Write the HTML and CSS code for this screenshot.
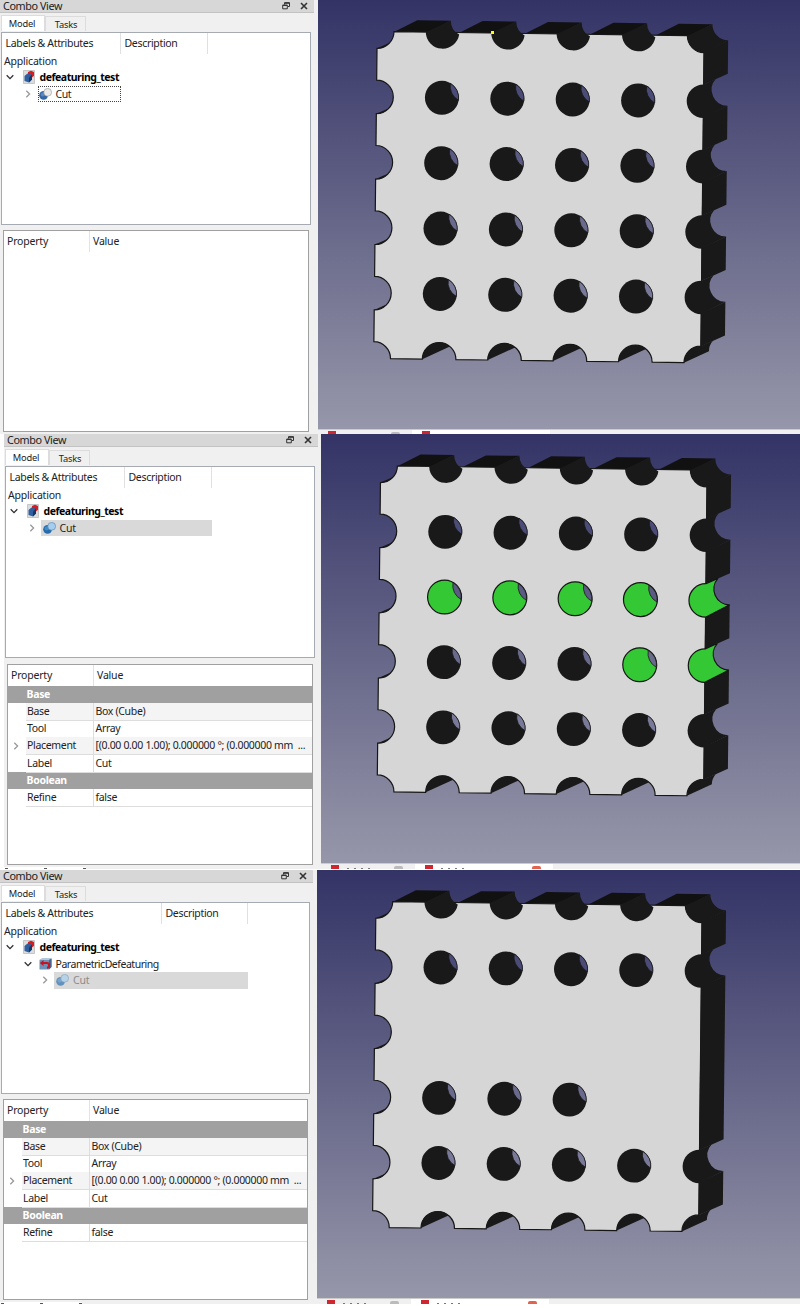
FILE: index.html
```html
<!DOCTYPE html>
<html lang="en">
<head>
<meta charset="utf-8">
<title>Parametric defeaturing</title>
<link rel="stylesheet" href="styles.css">
</head>
<body>
<svg class="defs" width="0" height="0" aria-hidden="true">
  <defs>
    <symbol id="i-float" viewBox="0 0 8 8"><path d="M2.5 2.5V.8h5v3.7H6M.7 3.2h4.6v3.6H.7z" fill="none" stroke="#333" stroke-width="1"/><path d="M2.5 1h5M.7 3.4h4.6" stroke="#333" stroke-width="1.4"/></symbol>
    <symbol id="i-close" viewBox="0 0 8 8"><path d="M1 1l6 6M7 1L1 7" stroke="#333" stroke-width="1.6"/></symbol>
    <symbol id="i-open" viewBox="0 0 8 8"><path d="M.7 2.2L4 5.6l3.3-3.4" fill="none" stroke="#333" stroke-width="1.3"/></symbol>
    <symbol id="i-shut" viewBox="0 0 8 8"><path d="M2.3 .7L5.6 4 2.3 7.3" fill="none" stroke="#999" stroke-width="1.3"/></symbol>
    <symbol id="i-doc" viewBox="0 0 12 14"><path d="M.5 .5h11v13H.5z" fill="#dcdcdc" stroke="#bbb" stroke-width=".8"/><path d="M5 2l3-1.200 3 1.300v3.700L9 7.500 5 5z" fill="#d51c22"/><path d="M1.500 6l3-2.600 4.500 1.200v5L6 12.500 1.500 11z" fill="#2f5f9e"/><path d="M6 7.500l3-2.900v5L6 12.500z" fill="#173763"/></symbol>
    <symbol id="i-cut" viewBox="0 0 13 12"><circle cx="4.600" cy="7.300" r="4.400" fill="#3465a4"/><circle cx="3.600" cy="6.600" r="2" fill="#5787bd"/><circle cx="8.700" cy="4.300" r="3.900" fill="#e9e9e7" stroke="#999" stroke-width=".6"/></symbol>
    <symbol id="i-cut-sel" viewBox="0 0 13 12"><circle cx="4.600" cy="7.300" r="4.400" fill="#256cae"/><circle cx="3.600" cy="6.600" r="2" fill="#438bc7"/><circle cx="8.700" cy="4.300" r="3.900" fill="#a5cdee" stroke="#5c8eb8" stroke-width=".7"/></symbol>
    <symbol id="i-defeat" viewBox="0 0 13 12"><path d="M.5 2L3 .5h9.500V9L10 11.500H.5z" fill="#6f91b8"/><path d="M.5 2L3 .5h9.500L10 2z" fill="#b2c7de"/><path d="M10 2l2.500-1.500V9L10 11.500z" fill="#46658d"/><path d="M3.500 5h4.200c3.300 0 3.300 4.500.3 4.800" fill="none" stroke="#c41420" stroke-width="2"/><path d="M.8 5l3.700-3v6z" fill="#c41420"/></symbol>

    <path id="front" d="M16.800 0H310.200A16.800 16.800 0 0 0 327 16.800V310.200A16.800 16.800 0 0 0 310.200 327H278.400A16.800 16.800 0 0 0 244.800 327H213A16.800 16.800 0 0 0 179.400 327H147.600A16.800 16.800 0 0 0 114 327H82.200A16.800 16.800 0 0 0 48.600 327H16.800A16.800 16.800 0 0 0 0 310.200V278.400A16.800 16.800 0 0 0 0 244.800V213A16.800 16.800 0 0 0 0 179.400V147.600A16.800 16.800 0 0 0 0 114V82.200A16.800 16.800 0 0 0 0 48.600V16.800A16.800 16.800 0 0 0 16.800 0Z"/>
    <path id="top-face" d="M16.300 .5L39.900 -11.800H73.500L49.600 .5Z"/>
    <path id="top-hole" d="M-16.800 0L8.100 -11.800A15.900 15.900 0 0 0 16.600 2A16.800 16.800 0 0 1 -16.800 0Z"/>
    <path id="bottom-hole" d="M-16.800 0A16.800 16.800 0 0 1 10.600 -13Z"/>
    <path id="left-hole" d="M0 16.800L12.600 11.100A16.800 16.800 0 0 1 0 16.800Z"/>
    <path id="right-hole" d="M0 -16.800L12 -22.300A15.900 15.900 0 0 0 24 4.100L0 16.800A16.800 16.800 0 0 1 0 -16.800Z"/>
    <path id="side-face" d="M-.4 16.300L24 4.100V37.700L-.4 49Z"/>
    <circle id="bore" r="17"/>
    <path id="lens" d="M8.340 -14.580A15.900 15.900 0 0 0 16.640 2.300A16.800 16.800 0 0 0 8.340 -14.580Z"/>
    <g id="hole"><use href="#bore"/><use href="#lens" class="through"/></g>
    <g id="hole-row"><use href="#hole" x="65.400"/><use href="#hole" x="130.800"/><use href="#hole" x="196.200"/><use href="#hole" x="261.600"/></g>
    <g id="shell">
      <g class="top"><use href="#top-face"/><use href="#top-face" x="65.400"/><use href="#top-face" x="130.800"/><use href="#top-face" x="196.200"/><use href="#top-face" x="261.600"/></g>
      <use href="#front" class="face"/>
      <use href="#top-hole" x="65.400"/><use href="#top-hole" x="130.800"/><use href="#top-hole" x="196.200"/><use href="#top-hole" x="261.600"/>
      <path d="M310.200 0L335.100 -11.800A15.900 15.900 0 0 0 351 4.100L327 16.800A16.800 16.800 0 0 1 310.200 0Z"/>
      <use href="#bottom-hole" x="65.400" y="327"/><use href="#bottom-hole" x="130.800" y="327"/><use href="#bottom-hole" x="196.200" y="327"/><use href="#bottom-hole" x="261.600" y="327"/>
      <path d="M310.200 327A16.800 16.800 0 0 1 327 310.200L339 304.700A15.900 15.900 0 0 0 335.100 315.200Z"/>
      <use href="#left-hole"/><use href="#left-hole" y="65.400"/><use href="#left-hole" y="130.800"/><use href="#left-hole" y="196.200"/><use href="#left-hole" y="261.600"/>
    </g>
    <g id="sides"><use href="#side-face" x="327"/><use href="#side-face" x="327" y="65.400"/><use href="#side-face" x="327" y="130.800"/><use href="#side-face" x="327" y="196.200"/><use href="#side-face" x="327" y="261.600"/></g>
  </defs>
</svg>

<main class="sheet">
  <section class="shot shot-a">
    <aside class="combo">
      <header class="title"><span>Combo View</span><svg><use href="#i-float"/></svg><svg><use href="#i-close"/></svg></header>
      <nav class="tabs"><span class="tab on">Model</span><span class="tab">Tasks</span></nav>
      <div class="tree">
        <div class="cols"><span class="c1">Labels &amp; Attributes</span><span class="c2">Description</span></div>
        <div class="app">Application</div>
        <div class="node"><svg class="arrow"><use href="#i-open"/></svg><svg class="doc"><use href="#i-doc"/></svg><b>defeaturing_test</b></div>
        <div class="node child"><svg class="arrow"><use href="#i-shut"/></svg><span class="item focus"><svg><use href="#i-cut"/></svg>Cut</span></div>
      </div>
      <div class="props"><div class="phead"><span>Property</span><span>Value</span></div></div>
    </aside>
    <div class="view">
      <svg class="scene" viewBox="318 0 482 429">
        <g class="body" transform="matrix(1 .0133 -.0107 1 377.200 31.500)">
          <use href="#shell"/><use href="#sides"/>
          <use href="#hole-row" y="65.400" class="r1"/><use href="#hole-row" y="130.800" class="r2"/><use href="#hole-row" y="196.200" class="r3"/><use href="#hole-row" y="261.600" class="r4"/>
          <use href="#right-hole" x="327" y="65.400"/><use href="#right-hole" x="327" y="130.800"/><use href="#right-hole" x="327" y="196.200"/><use href="#right-hole" x="327" y="261.600"/>
        </g>
        <rect x="491" y="31" width="3" height="3" fill="#ff0"/>
      </svg>
      <div class="docs"><span class="dtab"><i class="logo"></i><i class="x"></i></span><span class="dtab on"><i class="logo"></i></span></div>
    </div>
  </section>

  <section class="shot shot-b">
    <aside class="combo">
      <header class="title"><span>Combo View</span><svg><use href="#i-float"/></svg><svg><use href="#i-close"/></svg></header>
      <nav class="tabs"><span class="tab on">Model</span><span class="tab">Tasks</span></nav>
      <div class="tree">
        <div class="cols"><span class="c1">Labels &amp; Attributes</span><span class="c2">Description</span></div>
        <div class="app">Application</div>
        <div class="node"><svg class="arrow"><use href="#i-open"/></svg><svg class="doc"><use href="#i-doc"/></svg><b>defeaturing_test</b></div>
        <div class="node child"><svg class="arrow"><use href="#i-shut"/></svg><span class="item sel"><svg><use href="#i-cut-sel"/></svg>Cut</span></div>
      </div>
      <div class="props">
        <div class="phead"><span>Property</span><span>Value</span></div>
        <div class="group">Base</div>
        <div class="prow alt"><i></i><span>Base</span><span>Box (Cube)</span></div>
        <div class="prow"><i></i><span>Tool</span><span>Array</span></div>
        <div class="prow alt"><i><svg class="arrow"><use href="#i-shut"/></svg></i><span>Placement</span><span>[(0.00 0.00 1.00); 0.000000 °; (0.000000 mm &nbsp;...</span></div>
        <div class="prow"><i></i><span>Label</span><span>Cut</span></div>
        <div class="group">Boolean</div>
        <div class="prow"><i></i><span>Refine</span><span>false</span></div>
      </div>
      <div class="marks"><i></i><i></i><i></i></div>
    </aside>
    <div class="view">
      <svg class="scene" viewBox="321 0 479 428.500">
        <g class="body" transform="translate(4 .4) scale(.9985 .9965) matrix(1 .0133 -.0107 1 377.200 31.500)">
          <use href="#shell"/><use href="#sides"/>
          <use href="#hole-row" y="65.400" class="r1"/>
          <g class="green r2"><use href="#hole-row" y="130.800"/><use href="#right-hole" x="327" y="130.800"/></g>
          <g class="r3"><use href="#hole" x="65.400" y="196.200"/><use href="#hole" x="130.800" y="196.200"/><use href="#hole" x="196.200" y="196.200"/></g>
          <g class="green r3"><use href="#hole" x="261.600" y="196.200"/><use href="#right-hole" x="327" y="196.200"/></g>
          <use href="#hole-row" y="261.600" class="r4"/>
          <use href="#right-hole" x="327" y="65.400"/><use href="#right-hole" x="327" y="261.600"/>
        </g>
      </svg>
      <div class="docs"><span class="dtab"><i class="logo"></i><i class="hint"></i><i class="x"></i></span><span class="dtab on"><i class="logo"></i><i class="hint"></i><i class="x"></i></span></div>
    </div>
  </section>

  <section class="shot shot-c">
    <aside class="combo">
      <header class="title"><span>Combo View</span><svg><use href="#i-float"/></svg><svg><use href="#i-close"/></svg></header>
      <nav class="tabs"><span class="tab on">Model</span><span class="tab">Tasks</span></nav>
      <div class="tree">
        <div class="cols"><span class="c1">Labels &amp; Attributes</span><span class="c2">Description</span></div>
        <div class="app">Application</div>
        <div class="node"><svg class="arrow"><use href="#i-open"/></svg><svg class="doc"><use href="#i-doc"/></svg><b>defeaturing_test</b></div>
        <div class="node child"><svg class="arrow"><use href="#i-open"/></svg><span class="item"><svg><use href="#i-defeat"/></svg>ParametricDefeaturing</span></div>
        <div class="node grandchild"><svg class="arrow"><use href="#i-shut"/></svg><span class="item sel dim"><svg><use href="#i-cut-sel"/></svg>Cut</span></div>
      </div>
      <div class="props">
        <div class="phead"><span>Property</span><span>Value</span></div>
        <div class="group">Base</div>
        <div class="prow alt"><i></i><span>Base</span><span>Box (Cube)</span></div>
        <div class="prow"><i></i><span>Tool</span><span>Array</span></div>
        <div class="prow alt"><i><svg class="arrow"><use href="#i-shut"/></svg></i><span>Placement</span><span>[(0.00 0.00 1.00); 0.000000 °; (0.000000 mm &nbsp;...</span></div>
        <div class="prow"><i></i><span>Label</span><span>Cut</span></div>
        <div class="group">Boolean</div>
        <div class="prow"><i></i><span>Refine</span><span>false</span></div>
      </div>
      <div class="marks"><i></i><i></i><i></i></div>
    </aside>
    <div class="view">
      <svg class="scene" viewBox="316.500 0 483.500 427.500">
        <g class="body" transform="translate(-.8 .1) scale(.9975 .9965) matrix(1 .0133 -.0107 1 377.200 31.500)">
          <use href="#shell"/>
          <use href="#side-face" x="327"/><use href="#side-face" x="327" y="261.600"/>
          <path d="M326.600 81.700L351 69.500V233.900L326.600 245.200Z"/>
          <use href="#hole-row" y="65.400" class="r1"/>
          <g class="r3"><use href="#hole" x="65.400" y="196.200"/><use href="#hole" x="130.800" y="196.200"/><use href="#hole" x="196.200" y="196.200"/></g>
          <use href="#hole-row" y="261.600" class="r4"/>
          <use href="#right-hole" x="327" y="65.400"/><use href="#right-hole" x="327" y="261.600"/>
        </g>
      </svg>
      <div class="docs"><span class="dtab"><i class="logo"></i><i class="hint"></i><i class="x"></i></span><span class="dtab on"><i class="logo"></i><i class="hint"></i><i class="x"></i></span></div>
    </div>
  </section>
</main>
</body>
</html>
```

FILE: styles.css
```css
* { box-sizing: border-box; }
body { margin: 0; background: #fff; font: 10.5px/16px "Noto Sans", "Open Sans", sans-serif; letter-spacing: -.32px; color: #222; }
.defs { display: block; position: absolute; }
.sheet { width: 800px; height: 1308px; overflow: hidden; }

.shot { display: grid; overflow: hidden; }
.shot-a { height: 434px; grid-template-columns: 318px 482px; background: #f0f0f0; }
.shot-b { height: 436px; grid-template-columns: 321px 479px; padding-bottom: 1px; }
.shot-c { height: 438px; grid-template-columns: 316.5px 483.5px; padding-bottom: 4px; }

/* docked combo view */
.combo { display: flex; flex-direction: column; background: #f0f0f0; padding-right: 4px; min-height: 0; overflow: hidden; }
.shot-b .combo { margin-left: 4px; padding-right: 3px; }
.shot-c .combo { padding-right: 3.5px; }
.title { display: flex; flex: none; align-items: center; height: 13px; background: #d7d7d7; border-bottom: 1px solid #c2c2c2; padding: 0 6px 1px 3px; line-height: 11px; font-size: 10.8px; letter-spacing: -.4px; }
.title span { flex: 1; }
.title svg { width: 8px; height: 8px; margin-left: 10px; }
.tabs { display: flex; flex: none; align-items: flex-end; height: 18px; padding-left: 1px; font-size: 9.3px; line-height: 15px; letter-spacing: -.2px; text-align: center; }
.tab { width: 41px; height: 15px; border: 1px solid #dcdcdc; border-bottom: 0; background: #f0f0f0; padding-left: 1px; }
.tab.on { width: 44px; height: 16px; background: #fff; padding: 0 2px 0 0; }

.tree { flex: none; height: 193px; margin: 1px 3px 0 1px; border: 1px solid #a5aab3; background: #fff; }
.shot-b .tree, .shot-c .tree { height: 192px; }
.shot-b .tree { margin-right: 0; width: 310px; }
.cols { display: flex; height: 21px; line-height: 21px; }
.c1, .c2 { border-right: 1px solid #e0e0e0; padding-left: 3.5px; }
.c1 { width: 119px; }
.c2 { width: 87px; }
.shot-c .c1 { width: 160px; }
.shot-c .c2 { width: 86px; }
.app { height: 15px; line-height: 15px; padding-left: 2px; letter-spacing: -.2px; }
.node { display: flex; align-items: center; height: 16.5px; padding-left: 4px; }
.arrow { width: 8px; height: 8px; flex: none; }
.node b { color: #000; letter-spacing: -.48px; }
.doc { width: 12px; height: 14px; margin: 0 5px 0 8.5px; }
.child { padding-left: 21.5px; letter-spacing: -.47px; }
.grandchild { padding-left: 39px; letter-spacing: -.3px; }
.item { display: flex; align-items: center; height: 16.5px; margin-left: 5px; padding-left: 2px; }
.item svg { width: 13px; height: 12px; margin-right: 4px; }
.focus { width: 83px; border: 1px dotted #444; padding-left: 0; margin-left: 6px; }
.sel { background: #d9d9d9; width: 171px; letter-spacing: -.2px; }
.dim { width: 194px; color: #8b8b8b; }
.dim svg { opacity: .65; }

/* property editor */
.props { flex: none; width: 306px; height: 202px; margin: 5px 0 0 3px; border: 1px solid #a0a0a0; background: #fff; }
.shot-b .props, .shot-c .props { height: 201px; margin-top: 6px; }
.shot-c .props { width: 305px; margin-top: 5px; }
.phead { display: flex; height: 20.5px; line-height: 21px; letter-spacing: -.2px; }
.phead span { padding-left: 3px; }
.phead span:first-child { width: 86px; border-right: 1px solid #e3e3e3; }
.group { height: 17.3px; line-height: 17px; background: #a0a0a0; color: #fff; font-weight: bold; padding-left: 18.5px; }
.prow { display: grid; grid-template-columns: 17.5px 68.500px minmax(0, 1fr); height: 17.3px; line-height: 17px; }
.prow i { display: flex; align-items: center; padding-left: 4px; }
.prow span { padding-left: 1.5px; border-bottom: 1px solid #ddd; white-space: pre; }
.prow span:nth-child(2) { border-right: 1px solid #ddd; }
.alt span { background: #f4f4f4; }
.marks { display: flex; height: 3px; margin-top: 2px; gap: 36px; padding-left: 1px; background: #fff; width: 82px; }
.marks i { width: 3px; height: 1px; margin-top: 1px; background: #555; }

/* 3D viewport */
.view { display: flex; flex-direction: column; background: linear-gradient(#333366, #9898ab); min-height: 0; }
.scene { display: block; width: 100%; flex: 1; min-height: 0; }
.body { fill: #191919; }
.top { fill: #111; }
.face { fill: #d6d6d6; stroke: #161616; stroke-width: 1.2; }
.through { stroke: #191919; stroke-width: .8; }
.green { fill: #34c834; stroke: #151515; stroke-width: 1.2; }
.r1 { --sky: #4b4b78; }
.r2 { --sky: #5a5a82; }
.r3 { --sky: #6a6a8d; }
.r4 { --sky: #797999; }
.through { fill: var(--sky); }

/* document tabs, cut off by the lower edge */
.docs { display: flex; flex: none; height: 5px; background: #f0f0f0; border-top: 1px solid #ccc; }
.shot-b .docs, .shot-c .docs { height: 6.5px; }
.dtab { display: flex; width: 94px; padding: 1px 12px 0 10px; }
.dtab.on { width: 138px; background: #fff; }
.logo { width: 8px; background: #cf2730; }
.hint { width: 28px; height: 1px; margin: 3px 0 0 8px; background: repeating-linear-gradient(90deg, #777 0 2px, transparent 2px 7px); }
.x { width: 9px; margin-left: auto; border-radius: 2px 2px 0 0; background: #bbb; margin-top: 1px; }
.on .x { background: #e2634f; }
```
